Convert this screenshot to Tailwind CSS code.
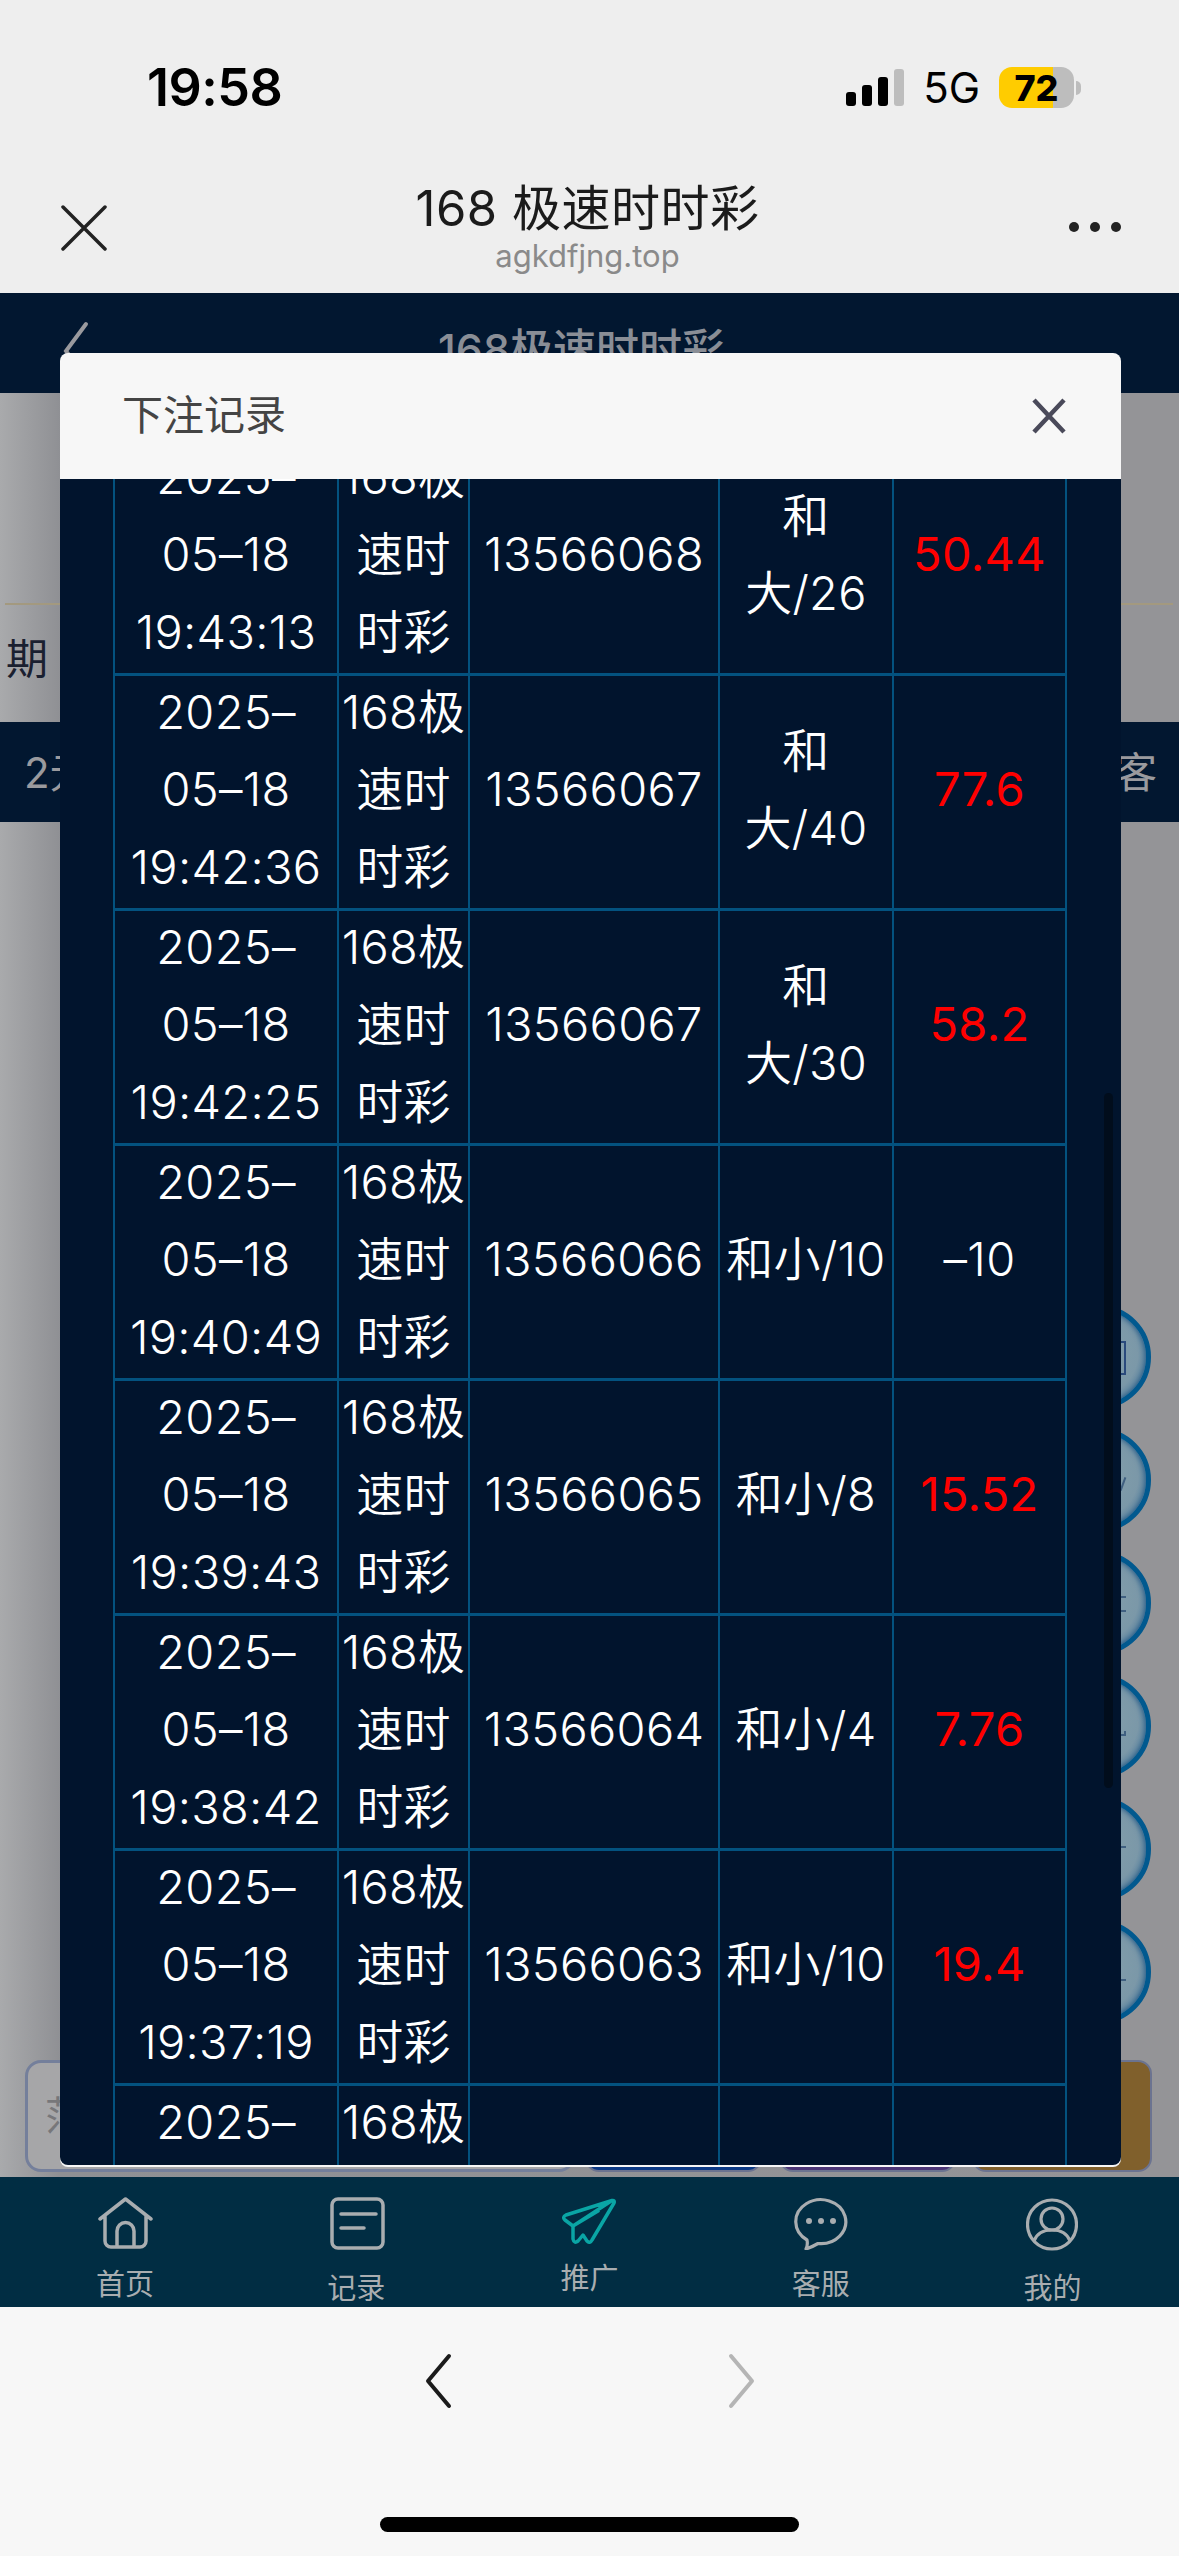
<!DOCTYPE html>
<html lang="zh-CN">
  <head>
    <meta charset="UTF-8" />
    <meta name="viewport" content="width=device-width, initial-scale=1.0" />
    <title>168极速时时彩</title>
    <script src="https://cdn.jsdelivr.net/npm/@tailwindcss/browser@4"></script>
  </head>
  <body class="w-[1179px] h-[2556px] overflow-hidden flex flex-col bg-[#f7f7f7] font-[Inter,'Noto_Sans_CJK_SC',sans-serif]">
    <!-- browser header -->
    <header class="h-[293px] shrink-0 bg-[#eeeeee]">
      <div class="h-[115px] pt-[60px] pl-[147px] pr-[98px] flex items-center justify-between">
        <span class="text-[52px] leading-[55px] font-semibold text-black tracking-[-0.5px]">19:58</span>
        <div class="flex items-center">
          <div class="flex items-end gap-[6px] h-[37px]">
            <div class="w-[10px] h-[14px] rounded-[3px] bg-black"></div>
            <div class="w-[10px] h-[21px] rounded-[3px] bg-black"></div>
            <div class="w-[10px] h-[29px] rounded-[3px] bg-black"></div>
            <div class="w-[10px] h-[37px] rounded-[3px] bg-[#bdbdbd]"></div>
          </div>
          <span class="ml-[19px] text-[42px] leading-[44px] text-black">5G</span>
          <div class="ml-[19px] flex items-center">
            <div class="w-[75px] h-[41px] rounded-[13px] flex items-center justify-center text-[36px] font-extrabold text-black bg-[linear-gradient(90deg,#ffcc00_54px,#bdbdbd_54px)]">72</div>
            <div class="w-[5px] h-[14px] ml-[2px] rounded-r-full bg-[#bdbdbd]"></div>
          </div>
        </div>
      </div>
      <div class="flex justify-between pl-[60px] pr-[58px] mt-[65px]">
        <svg class="mt-[25px]" width="48" height="46" viewBox="0 0 48 46" fill="none" stroke="#222" stroke-width="3.5" stroke-linecap="round">
          <path d="M3 2L45 44M45 2L3 44" />
        </svg>
        <div class="flex flex-col items-center">
          <div class="mt-[1px] text-[49px] leading-[56px] tracking-[0.5px] text-[#1b1b1b]">168 极速时时彩</div>
          <div class="mt-[2px] text-[31px] leading-[34px] text-[#8a8a8a]">agkdfjng.top</div>
        </div>
        <div class="mt-[42px] w-[54px] flex justify-end gap-[11px]">
          <div class="w-[10px] h-[10px] rounded-full bg-[#222] shrink-0"></div>
          <div class="w-[10px] h-[10px] rounded-full bg-[#222] shrink-0"></div>
          <div class="w-[10px] h-[10px] rounded-full bg-[#222] shrink-0"></div>
        </div>
      </div>
    </header>

    <!-- dimmed page behind the dialog -->
    <main class="relative h-[1884px] shrink-0 flex flex-col bg-[linear-gradient(90deg,#a9aaac,#8f9094_60px,#949497_1121px)]">
      <div class="h-[100px] shrink-0 bg-[#021730] flex items-start relative">
        <svg class="absolute left-[62px] top-[28px]" width="28" height="60" viewBox="0 0 28 60" fill="none" stroke="#9a9a9e" stroke-width="4" stroke-linecap="round">
          <path d="M24 3L4 30L24 57" />
        </svg>
        <div class="w-full text-center mt-[28px] pr-[16px] text-[43px] leading-[56px] font-medium text-[#8a8e96]">168极速时时彩</div>
      </div>
      <div class="mt-[210px] ml-[5px] mr-[6px] h-[2px] bg-[#a3997f]"></div>
      <div class="mt-[30px] ml-[6px] text-[42px] leading-[48px] text-[#1a2030]">期</div>
      <div class="mt-[39px] h-[100px] shrink-0 bg-[#021730] flex items-center justify-between pl-[24px] pr-[22px] text-[42px] text-[#9a9a9e]">
        <span>2元</span>
        <span>客</span>
      </div>
      <div class="mt-auto mb-[5px] pl-[25px] pr-[27px] flex gap-[10px] h-[112px]">
        <div class="w-[550px] rounded-[16px] border-[3px] border-[#747f9b] bg-[#a6a6a8] pl-[17px] flex items-center text-[40px] text-[#77777a]">范</div>
        <div class="w-[178px] rounded-[14px] bg-[#0c3a86] border-2 border-[#6b7390]"></div>
        <div class="w-[177px] ml-[7px] rounded-[14px] bg-[#4c3577] border-2 border-[#6b7390]"></div>
        <div class="w-[180px] ml-[6px] rounded-[14px] bg-[#80602c] border-2 border-[#6b7390]"></div>
      </div>

      <!-- round buttons, mostly covered by the dialog -->
      <div class="absolute left-[1047px] top-[1012px] flex flex-col gap-[19px]">
        <div class="w-[104px] h-[104px] rounded-full border-[5px] border-[#01598f] bg-[radial-gradient(circle_at_45%_45%,#86a0ac,#7b98a8_60%,#3b6f97)] shadow-[inset_0_0_6px_#124d80] relative">
          <div class="absolute left-[64px] top-[31px] w-[10px] h-[34px] border-2 border-[#2a4a7c] border-l-0"></div>
        </div>
        <div class="w-[104px] h-[104px] rounded-full border-[5px] border-[#01598f] bg-[radial-gradient(circle_at_45%_45%,#86a0ac,#7b98a8_60%,#3b6f97)] shadow-[inset_0_0_6px_#124d80] relative">
          <div class="absolute left-[70px] top-[44px] w-[2px] h-[14px] rotate-[20deg] bg-[#3f5f80]"></div>
        </div>
        <div class="w-[104px] h-[104px] rounded-full border-[5px] border-[#01598f] bg-[radial-gradient(circle_at_45%_45%,#86a0ac,#7b98a8_60%,#3b6f97)] shadow-[inset_0_0_6px_#124d80] relative">
          <div class="absolute left-[64px] top-[40px] w-[10px] h-[2px] bg-[#3f5f80]"></div>
          <div class="absolute left-[64px] top-[54px] w-[10px] h-[2px] bg-[#3f5f80]"></div>
        </div>
        <div class="w-[104px] h-[104px] rounded-full border-[5px] border-[#01598f] bg-[radial-gradient(circle_at_45%_45%,#86a0ac,#7b98a8_60%,#3b6f97)] shadow-[inset_0_0_6px_#124d80] relative">
          <div class="absolute left-[64px] top-[52px] w-[10px] h-[5px] border-b-2 border-r-2 border-[#3f5f80]"></div>
        </div>
        <div class="w-[104px] h-[104px] rounded-full border-[5px] border-[#01598f] bg-[radial-gradient(circle_at_45%_45%,#86a0ac,#7b98a8_60%,#3b6f97)] shadow-[inset_0_0_6px_#124d80] relative">
          <div class="absolute left-[64px] top-[44px] w-[10px] h-[2px] bg-[#3f5f80]"></div>
        </div>
        <div class="w-[104px] h-[104px] rounded-full border-[5px] border-[#01598f] bg-[radial-gradient(circle_at_45%_45%,#86a0ac,#7b98a8_60%,#3b6f97)] shadow-[inset_0_0_6px_#124d80] relative">
          <div class="absolute left-[64px] top-[54px] w-[10px] h-[2px] bg-[#3f5f80]"></div>
        </div>
      </div>

      <!-- dialog -->
      <section class="absolute left-[60px] top-[60px] w-[1061px] h-[1814px] rounded-[8px] bg-[#f7f7f7] flex flex-col">
        <div class="h-[126px] shrink-0 flex items-center justify-between pl-[62px] pr-[55px]">
          <span class="text-[41px] text-[#444444]">下注记录</span>
          <svg width="34" height="36" viewBox="0 0 34 36" fill="none" stroke="#4a4a5a" stroke-width="4.5">
            <path d="M2 2L32 34M32 2L2 34" />
          </svg>
        </div>
        <div class="relative h-[1686px] shrink-0 overflow-hidden rounded-b-[8px] bg-[#01142d]">
          <table class="ml-[53px] -mt-[41px] w-[952px] table-fixed border-collapse text-center text-[47px] leading-[77.33px] tracking-[0.3px] font-[350] text-white [&_td]:h-[232px] [&_td]:p-0 [&_td]:border-x-[2px] [&_td]:border-y-[3px] [&_td]:border-[#03527f] [&_td]:-translate-y-[3px]">
            <colgroup>
              <col class="w-[224px]" />
              <col class="w-[131px]" />
              <col class="w-[250px]" />
              <col class="w-[174px]" />
              <col class="w-[173px]" />
            </colgroup>
            <tbody>
              <tr>
                <td>2025–<br />05–18<br />19:43:13</td>
                <td>168极<br />速时<br />时彩</td>
                <td>13566068</td>
                <td>和<br />大/26</td>
                <td class="text-[#ff0000] font-normal">50.44</td>
              </tr>
              <tr>
                <td>2025–<br />05–18<br />19:42:36</td>
                <td>168极<br />速时<br />时彩</td>
                <td>13566067</td>
                <td>和<br />大/40</td>
                <td class="text-[#ff0000] font-normal">77.6</td>
              </tr>
              <tr>
                <td>2025–<br />05–18<br />19:42:25</td>
                <td>168极<br />速时<br />时彩</td>
                <td>13566067</td>
                <td>和<br />大/30</td>
                <td class="text-[#ff0000] font-normal">58.2</td>
              </tr>
              <tr>
                <td>2025–<br />05–18<br />19:40:49</td>
                <td>168极<br />速时<br />时彩</td>
                <td>13566066</td>
                <td>和小/10</td>
                <td>–10</td>
              </tr>
              <tr>
                <td>2025–<br />05–18<br />19:39:43</td>
                <td>168极<br />速时<br />时彩</td>
                <td>13566065</td>
                <td>和小/8</td>
                <td class="text-[#ff0000] font-normal">15.52</td>
              </tr>
              <tr>
                <td>2025–<br />05–18<br />19:38:42</td>
                <td>168极<br />速时<br />时彩</td>
                <td>13566064</td>
                <td>和小/4</td>
                <td class="text-[#ff0000] font-normal">7.76</td>
              </tr>
              <tr>
                <td>2025–<br />05–18<br />19:37:19</td>
                <td>168极<br />速时<br />时彩</td>
                <td>13566063</td>
                <td>和小/10</td>
                <td class="text-[#ff0000] font-normal">19.4</td>
              </tr>
              <tr>
                <td class="align-top">2025–</td>
                <td class="align-top">168极</td>
                <td></td>
                <td></td>
                <td></td>
              </tr>
            </tbody>
          </table>
          <div class="absolute left-[1044px] top-[614px] w-[9px] h-[695px] rounded-full bg-[#010d1c]"></div>
        </div>
      </section>
    </main>

    <!-- bottom tabs -->
    <nav class="h-[130px] shrink-0 bg-[#012d43] px-[9px] grid grid-cols-5 text-[29px] leading-[32px] text-[#a9adb0]">
      <a class="flex flex-col items-center pt-[20px]">
        <svg width="55" height="52" viewBox="0 0 55 52" fill="none" stroke="#a9adb0" stroke-width="3.5" stroke-linecap="round" stroke-linejoin="round">
          <path d="M2 22L27.5 2L53 22M7 19V44a6 6 0 0 0 6 6H42a6 6 0 0 0 6-6V19M19 50V34a8.5 8.5 0 0 1 17 0V50" />
        </svg>
        <span class="mt-[20px]">首页</span>
      </a>
      <a class="flex flex-col items-center pt-[20px]">
        <svg width="55" height="53" viewBox="0 0 55 53" fill="none" stroke="#a9adb0" stroke-width="3.5" stroke-linecap="round">
          <rect x="2" y="2" width="51" height="49" rx="6" />
          <path d="M11 17H46M11 31H34" />
        </svg>
        <span class="mt-[23px] pr-[2px]">记录</span>
      </a>
      <a class="flex flex-col items-center pt-[21px]">
        <svg width="54" height="46" viewBox="0 0 54 46" fill="none" stroke="#0aa5a5" stroke-width="3.5" stroke-linecap="round" stroke-linejoin="round">
          <path d="M50 2.5L4 17Q0 19 3 22L11 28L36 13M11 28V41Q12 46 16 43L21 37L25 43Q28 46 30 42L52 5Q53 2 50 2.5Z" />
        </svg>
        <span class="mt-[19px]">推广</span>
      </a>
      <a class="flex flex-col items-center pt-[20px] pr-[2px]">
        <svg width="54" height="53" viewBox="0 0 54 53" fill="none" stroke="#a9adb0" stroke-width="3.2" stroke-linejoin="round">
          <path d="M13 43A25 22 0 1 1 24 46.5Q18 50 12 52Q14 48 13 43Z" />
          <circle cx="15" cy="24" r="3" fill="#a9adb0" stroke="none" />
          <circle cx="27" cy="24" r="3" fill="#a9adb0" stroke="none" />
          <circle cx="39" cy="24" r="3" fill="#a9adb0" stroke="none" />
        </svg>
        <span class="mt-[19px]">客服</span>
      </a>
      <a class="flex flex-col items-center pt-[20px] pr-[3px]">
        <svg width="52" height="55" viewBox="0 0 52 55" fill="none" stroke="#a9adb0" stroke-width="3.2">
          <circle cx="26" cy="27.5" r="24.5" />
          <circle cx="26" cy="22" r="11" />
          <path d="M8 44Q12 33 26 33Q40 33 44 44" />
        </svg>
        <span class="mt-[21px]">我的</span>
      </a>
    </nav>

    <!-- browser footer -->
    <footer class="flex-1 flex flex-col items-center bg-[#f7f7f7]">
      <div class="flex gap-[274px] pt-[46px]">
        <svg width="30" height="56" viewBox="0 0 30 56" fill="none" stroke="#1b1b1b" stroke-width="4" stroke-linecap="round" stroke-linejoin="round">
          <path d="M26 3L5 28L26 53" />
        </svg>
        <svg width="30" height="56" viewBox="0 0 30 56" fill="none" stroke="#b5b5b5" stroke-width="4" stroke-linecap="round" stroke-linejoin="round">
          <path d="M4 3L25 28L4 53" />
        </svg>
      </div>
      <div class="mt-auto mb-[24px] w-[419px] h-[15px] rounded-full bg-black"></div>
    </footer>
  </body>
</html>
